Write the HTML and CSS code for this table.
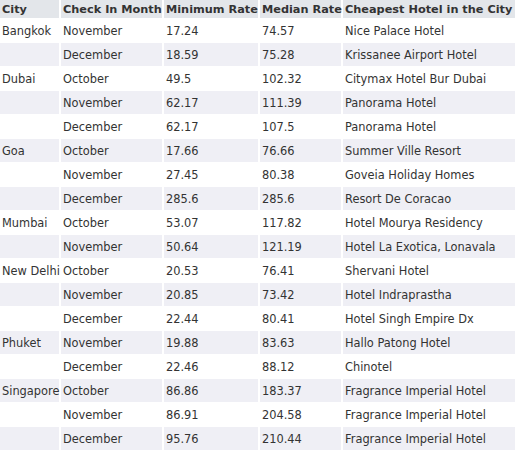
FILE: index.html
```html
<!DOCTYPE html>
<html>
<head>
<meta charset="utf-8">
<link rel="stylesheet" href="styles.css">
</head>
<body>
<div class="grid">
  <div class="h">City</div><div class="h">Check In Month</div><div class="h">Minimum Rate</div><div class="h">Median Rate</div><div class="h">Cheapest Hotel in the City</div>

  <div class="c">Bangkok</div><div class="c">November</div><div class="c">17.24</div><div class="c">74.57</div><div class="c">Nice Palace Hotel</div>
  <div class="c s"></div><div class="c s">December</div><div class="c s">18.59</div><div class="c s">75.28</div><div class="c s">Krissanee Airport Hotel</div>
  <div class="c">Dubai</div><div class="c">October</div><div class="c">49.5</div><div class="c">102.32</div><div class="c">Citymax Hotel Bur Dubai</div>
  <div class="c s"></div><div class="c s">November</div><div class="c s">62.17</div><div class="c s">111.39</div><div class="c s">Panorama Hotel</div>
  <div class="c"></div><div class="c">December</div><div class="c">62.17</div><div class="c">107.5</div><div class="c">Panorama Hotel</div>
  <div class="c s">Goa</div><div class="c s">October</div><div class="c s">17.66</div><div class="c s">76.66</div><div class="c s">Summer Ville Resort</div>
  <div class="c"></div><div class="c">November</div><div class="c">27.45</div><div class="c">80.38</div><div class="c">Goveia Holiday Homes</div>
  <div class="c s"></div><div class="c s">December</div><div class="c s">285.6</div><div class="c s">285.6</div><div class="c s">Resort De Coracao</div>
  <div class="c">Mumbai</div><div class="c">October</div><div class="c">53.07</div><div class="c">117.82</div><div class="c">Hotel Mourya Residency</div>
  <div class="c s"></div><div class="c s">November</div><div class="c s">50.64</div><div class="c s">121.19</div><div class="c s">Hotel La Exotica, Lonavala</div>
  <div class="c">New Delhi</div><div class="c">October</div><div class="c">20.53</div><div class="c">76.41</div><div class="c">Shervani Hotel</div>
  <div class="c s"></div><div class="c s">November</div><div class="c s">20.85</div><div class="c s">73.42</div><div class="c s">Hotel Indraprastha</div>
  <div class="c"></div><div class="c">December</div><div class="c">22.44</div><div class="c">80.41</div><div class="c">Hotel Singh Empire Dx</div>
  <div class="c s">Phuket</div><div class="c s">November</div><div class="c s">19.88</div><div class="c s">83.63</div><div class="c s">Hallo Patong Hotel</div>
  <div class="c"></div><div class="c">December</div><div class="c">22.46</div><div class="c">88.12</div><div class="c">Chinotel</div>
  <div class="c s">Singapore</div><div class="c s">October</div><div class="c s">86.86</div><div class="c s">183.37</div><div class="c s">Fragrance Imperial Hotel</div>
  <div class="c"></div><div class="c">November</div><div class="c">86.91</div><div class="c">204.58</div><div class="c">Fragrance Imperial Hotel</div>
  <div class="c s"></div><div class="c s">December</div><div class="c s">95.76</div><div class="c s">210.44</div><div class="c s">Fragrance Imperial Hotel</div>
</div>
</body>
</html>
```
FILE: styles.css
```css
html, body {
  margin: 0;
  padding: 0;
  background: #ffffff;
}
body {
  font-family: "DejaVu Sans", Verdana, sans-serif;
  font-size: 11.4px;
  color: #333333;
}
.grid {
  display: grid;
  grid-template-columns: 59px 101px 94px 81px 1fr;
  grid-auto-rows: 23px;
  grid-template-rows: 18px;
  column-gap: 2px;
  row-gap: 1px;
  width: 515px;
}
.h {
  background: #e3e6ea;
  font-weight: bold;
  font-size: 11.3px;
  padding: 0 0 0 2px;
  display: flex;
  align-items: center;
  white-space: nowrap;
}
.c {
  padding: 0 0 0 2px;
  display: flex;
  align-items: center;
  white-space: nowrap;
}
.s {
  background: #efeff5;
}
```
